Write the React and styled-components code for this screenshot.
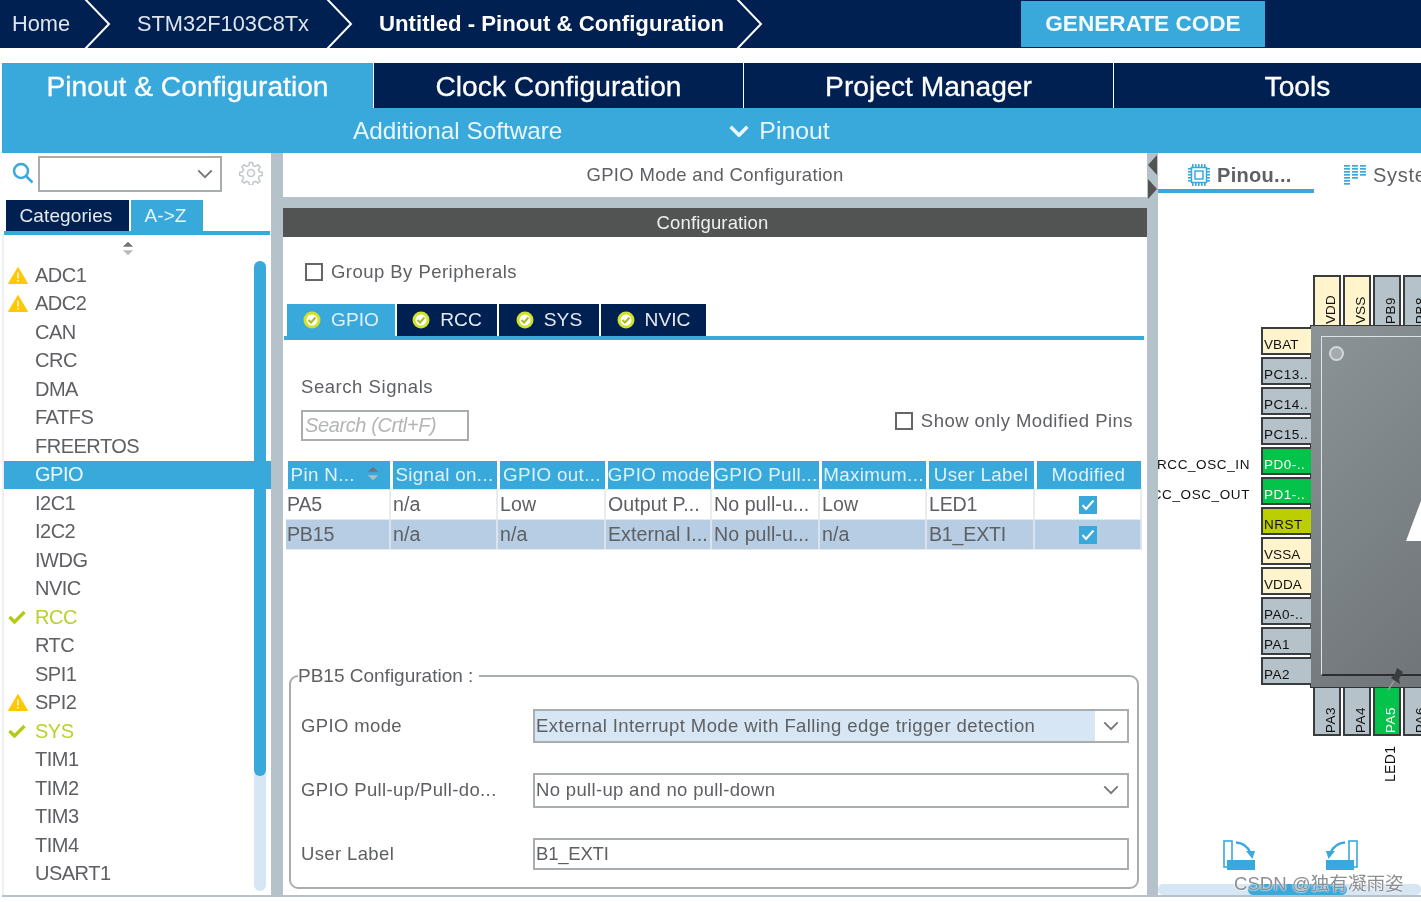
import React from 'react';
import styled, { createGlobalStyle } from 'styled-components';

const navy = '#002052';
const blue = '#39a9dc';
const steel = '#b6c2c9';
const text = '#5e6063';

const GlobalStyle = createGlobalStyle`
  html, body {
    margin: 0;
    padding: 0;
    background: #fff;
    overflow: hidden;
  }
  * { box-sizing: border-box; }
`;

const Page = styled.div`
  width: 1421px;
  height: 902px;
  overflow: hidden;
  position: relative;
  background: #fff;
  color: ${text};
  font-family: 'Liberation Sans', Arial, sans-serif;
  filter: blur(0.35px);
`;

/* breadcrumb bar */
const TopBar = styled.div`
  height: 48px;
  background: ${navy};
  display: flex;
  align-items: center;
  color: #fff;
`;
const Crumb = styled.div`
  width: ${p => p.$w}px;
  height: 48px;
  flex: none;
  padding-left: ${p => p.$pad}px;
  display: flex;
  align-items: center;
  justify-content: space-between;
  font-weight: ${p => (p.$bold ? 700 : 400)};
  font-size: ${p => (p.$bold ? 22.2 : 21.8)}px;
  color: ${p => (p.$bold ? '#fff' : '#dfe5ec')};
  white-space: nowrap;
`;
const Generate = styled.div`
  margin-left: 258px;
  width: 244px;
  height: 46px;
  flex: none;
  background: ${blue};
  color: #f4fbfe;
  font-weight: 700;
  font-size: 22.6px;
  display: flex;
  align-items: center;
  justify-content: center;
`;

/* main perspective tabs */
const MainTabs = styled.div`
  margin: 15px 0 0 2px;
  height: 45px;
  display: flex;
  gap: 1px;
`;
const MainTab = styled.div`
  width: ${p => p.$w}px;
  flex: none;
  background: ${p => (p.$active ? blue : navy)};
  color: #fff;
  font-size: 28.2px;
  -webkit-text-stroke: 0.3px #fff;
  padding-top: 2px;
  display: flex;
  align-items: center;
  justify-content: center;
`;
const SubBar = styled.div`
  margin-left: 2px;
  height: 45px;
  background: ${blue};
  color: #eaf6fc;
  font-size: 24.3px;
  display: flex;
  align-items: center;
  padding-left: 351px;
`;
const SubPinout = styled.div`
  margin-left: 167px;
  display: flex;
  align-items: center;
  gap: 10px;
  font-size: 24.8px;
`;

/* three columns */
const Workspace = styled.div`
  margin-left: 2px;
  height: 744px;
  display: flex;
  border-bottom: 2px solid ${steel};
`;
const Divider = styled.div`
  width: ${p => p.$w}px;
  background: ${steel};
  position: relative;
  flex: none;
`;
const Collapse = styled.svg`
  position: absolute;
  left: 1px;
  top: 2px;
`;

/* left column */
const Sidebar = styled.div`
  width: 269px;
  flex: none;
  display: flex;
  flex-direction: column;
`;
const SearchRow = styled.div`
  height: 47px;
  flex: none;
  padding: 3px 0 0 10px;
  display: flex;
  align-items: flex-start;
`;
const SearchGlass = styled.svg`
  margin: 6px 4px 0 0;
  flex: none;
`;
const Combo = styled.div`
  width: 184px;
  height: 36px;
  border: 2px solid #a9adb0;
  background: #fff;
  display: flex;
  align-items: center;
  justify-content: flex-end;
  padding-right: 7px;
`;
const Gear = styled.svg`
  margin: 5px 0 0 17px;
`;
const SideTabs = styled.div`
  padding-left: 4px;
  display: flex;
  gap: 2px;
  height: 31px;
  flex: none;
`;
const SideTab = styled.div`
  width: ${p => p.$w}px;
  background: ${p => (p.$active ? blue : navy)};
  color: ${p => (p.$active ? '#e9f6fc' : '#e6eaee')};
  font-size: 19px;
  letter-spacing: 0.1px;
  padding-right: 3px;
  display: flex;
  align-items: center;
  justify-content: center;
`;
const SideLine = styled.div`
  height: 4px;
  flex: none;
  margin: 0 1px 0 2px;
  background: ${blue};
`;
const ListArea = styled.div`
  flex: 1;
  position: relative;
  border-left: 2px solid #eef1f3;
  overflow: hidden;
`;
const SortMark = styled.div`
  position: absolute;
  left: 118px;
  top: 6px;
`;
const List = styled.div`
  padding-top: 26px;
`;
const ListRow = styled.div`
  height: 28.5px;
  padding-left: 1px;
  display: flex;
  align-items: center;
  font-size: 20px;
  letter-spacing: -0.5px;
  background: ${p => (p.$selected ? blue : 'transparent')};
  color: ${p => (p.$selected ? '#e9f6fc' : p.$ok ? '#bcd02b' : text)};
`;
const RowIcon = styled.div`
  width: 30px;
  flex: none;
  display: flex;
  align-items: center;
  justify-content: flex-start;
  padding-left: 3px;
`;
const SideScroll = styled.div`
  position: absolute;
  left: 250px;
  top: 26px;
  width: 12px;
  height: 630px;
  border-radius: 6px;
  background: #d6e6f4;
`;
const SideThumb = styled.div`
  height: 515px;
  border-radius: 6px;
  background: ${blue};
`;

/* middle column */
const Center = styled.div`
  width: 864px;
  flex: none;
  display: flex;
  flex-direction: column;
`;
const CenterTitle = styled.div`
  height: 44px;
  flex: none;
  display: flex;
  align-items: center;
  justify-content: center;
  font-size: 18.5px;
  letter-spacing: 0.3px;
`;
const GapBar = styled.div`
  height: 11px;
  flex: none;
  background: ${steel};
`;
const ConfigHead = styled.div`
  height: 29px;
  flex: none;
  background: #525453;
  color: #eef0f0;
  font-size: 18.5px;
  letter-spacing: 0.15px;
  display: flex;
  align-items: center;
  justify-content: center;
  padding: 1px 5px 0 0;
`;
const ConfigBody = styled.div`
  flex: 1;
  display: flex;
  flex-direction: column;
  padding: 0 3px 0 1px;
`;
const Check = styled.label`
  display: flex;
  align-items: center;
  gap: 8px;
  font-size: 18.5px;
  letter-spacing: 0.46px;
`;
const Box = styled.span`
  width: 18px;
  height: 18px;
  border: 2px solid #666;
  background: #fff;
  flex: none;
`;
const GroupRow = styled.div`
  padding: 24px 0 0 21px;
  height: 67px;
  flex: none;
`;
const InnerTabs = styled.div`
  display: flex;
  gap: 2px;
  height: 32px;
  flex: none;
  padding-left: 3px;
`;
const InnerTab = styled.div`
  width: ${p => p.$w}px;
  background: ${p => (p.$active ? blue : navy)};
  color: ${p => (p.$active ? '#dff1fa' : '#e6eaee')};
  font-size: 19.2px;
  display: flex;
  align-items: center;
  justify-content: center;
  gap: 10px;
`;
const InnerLine = styled.div`
  height: 4px;
  flex: none;
  background: ${blue};
`;
const SearchBlock = styled.div`
  height: 121px;
  flex: none;
  position: relative;
  padding: 36px 0 0 17px;
`;
const FieldCaption = styled.div`
  font-size: 18.5px;
  letter-spacing: 0.55px;
  line-height: 22px;
`;
const SignalSearch = styled.div`
  margin-top: 12px;
  width: 168px;
  height: 31px;
  border: 2px solid #a9adb0;
  padding-left: 2px;
  display: flex;
  align-items: center;
  font-size: 20px;
  font-style: italic;
  letter-spacing: -0.4px;
  color: #b3b5b7;
`;
const ModifiedOnly = styled.div`
  position: absolute;
  right: 11px;
  top: 70px;
`;
const Table = styled.div`
  margin: 0 2px;
  width: 856px;
  flex: none;
`;
const TableRow = styled.div`
  display: grid;
  grid-template-columns: 105px 107px 108px 106px 108px 107px 108px 107px;
  height: ${p => p.$h}px;
  background: ${p => (p.$selected ? '#b7cde4' : 'transparent')};
  border-bottom: 1px solid #e4e8eb;
`;
const HeadCell = styled.div`
  margin: 0 1.5px;
  background: ${blue};
  color: #dff1fa;
  font-size: 18.8px;
  letter-spacing: 0.35px;
  display: flex;
  align-items: center;
  justify-content: ${p => (p.$center ? 'center' : 'flex-start')};
  padding-left: ${p => (p.$center ? 0 : 3)}px;
  white-space: nowrap;
  position: relative;
`;
const Cell = styled.div`
  border-right: 2px solid ${p => (p.$selected ? '#d9e4ef' : '#e9ecee')};
  display: flex;
  align-items: center;
  justify-content: ${p => (p.$center ? 'center' : 'flex-start')};
  padding-left: ${p => (p.$center ? 0 : p.$first ? 1 : 2)}px;
  font-size: 19.6px;
  letter-spacing: ${p => p.$ls}px;
  white-space: nowrap;
`;
const TickBox = styled.span`
  width: 18px;
  height: 18px;
  background: ${blue};
  display: flex;
  align-items: center;
  justify-content: center;
`;
const SortSlot = styled.div`
  position: absolute;
  right: 11px;
  top: 3px;
`;
const Fieldset = styled.fieldset`
  margin: 115px 0 0 5px;
  width: 850px;
  height: 224px;
  flex: none;
  border: 2px solid #a9adb0;
  border-radius: 9px;
  padding: 7px 0 0;
  display: flex;
  flex-direction: column;
  position: relative;
`;
const Legend = styled.legend`
  margin-left: 7px;
  padding: 0 6px 0 0;
  font-size: 19px;
  line-height: 22px;
`;
const FieldRow = styled.div`
  display: grid;
  grid-template-columns: 232px 596px;
  align-items: center;
  height: 64px;
  flex: none;
  padding-left: 10px;
`;
const FieldLabel = styled.div`
  font-size: 18.5px;
  letter-spacing: 0.37px;
  white-space: nowrap;
`;
const Control = styled.div`
  height: ${p => p.$h}px;
  border: 2px solid #a9adb0;
  display: flex;
  align-items: center;
  font-size: 18.5px;
  letter-spacing: ${p => p.$ls}px;
  padding-left: 1px;
  background: #fff;
  white-space: nowrap;
`;
const ControlText = styled.div`
  flex: 1;
  align-self: stretch;
  display: flex;
  align-items: center;
  background: ${p => (p.$filled ? '#d6e6f4' : 'transparent')};
  margin-left: -1px;
  padding-left: 1px;
`;
const ControlArrow = styled.div`
  width: 32px;
  flex: none;
  display: flex;
  justify-content: center;
`;

/* right column */
const Right = styled.div`
  flex: 1;
  min-width: 0;
  display: flex;
  flex-direction: column;
  position: relative;
  overflow: hidden;
`;
const RightTabs = styled.div`
  height: 40px;
  flex: none;
  display: flex;
  position: relative;
  font-size: 20px;
  white-space: nowrap;
`;
const RightTab = styled.div`
  width: ${p => p.$w}px;
  flex: none;
  height: 40px;
  display: flex;
  align-items: center;
  padding-left: ${p => p.$pad}px;
  padding-top: 8px;
  gap: ${p => p.$gap}px;
  font-weight: ${p => (p.$active ? 700 : 400)};
  letter-spacing: ${p => (p.$active ? 0.3 : 0.7)}px;
  border-bottom: ${p => (p.$active ? `4px solid ${blue}` : 0)};
  padding-bottom: ${p => (p.$active ? 0 : 4)}px;
  svg { flex: none; }
`;
const ChipLayout = styled.div`
  flex: 1;
  position: relative;
  overflow: hidden;
  padding: 82px 0 0 103px;
`;
const ChipGrid = styled.div`
  display: grid;
  grid-template-columns: 49px 400px;
  grid-template-rows: 50px 363px 48px;
`;
const PinRow = styled.div`
  grid-column: 2;
  display: flex;
  gap: 2px;
  padding-left: 3px;
`;
const PinColumn = styled.div`
  display: flex;
  flex-direction: column;
  gap: 2px;
  padding-top: 2px;
`;
const pinColors = {
  free: steel,
  power: '#fff4cc',
  active: '#03c34b',
  reset: '#bccd00',
};
const Pin = styled.div`
  position: relative;
  flex: none;
  background: ${p => pinColors[p.$kind || 'free']};
  color: ${p => (p.$kind === 'active' ? '#fff' : '#111')};
  border: 2px solid #3a3d3f;
  font-size: 13.5px;
  letter-spacing: ${p => (p.$kind === 'power' ? 0.1 : 0.5)}px;
  white-space: nowrap;
  display: flex;
  align-items: center;
  ${p =>
    p.$side === 'left'
      ? `width: 50px; height: 28px; padding: 7px 0 0 1px; border-right: 0;`
      : `width: 28px; writing-mode: vertical-rl; transform: rotate(180deg); justify-content: flex-start; padding: 1px 7px 0 0;`}
  ${p => p.$side === 'top' && 'height: 50px; border-top: 0;'}
  ${p => p.$side === 'bottom' && 'height: 48px; border-bottom: 0;'}
`;
const SignalLabel = styled.div`
  position: absolute;
  right: 61px;
  top: 8px;
  color: #111;
  font-size: 13.5px;
  letter-spacing: 0.6px;
`;
const LedLabel = styled.div`
  position: absolute;
  left: 0;
  right: 6px;
  top: -48px;
  display: flex;
  align-items: center;
  color: #111;
  font-size: 14px;
  letter-spacing: 0.3px;
`;
const Chip = styled.div`
  grid-column: 2;
  background: linear-gradient(135deg, #8c9498 0%, #5d6165 100%);
  border: 1px solid #333;
  padding: 10px 0 11px 10px;
  display: flex;
`;
const ChipFace = styled.div`
  flex: 1;
  position: relative;
  border-left: 1px solid #dfe3e5;
  border-top: 1px solid #dfe3e5;
  border-bottom: 2px solid #2c2e30;
`;
const ChipDot = styled.div`
  position: absolute;
  left: 7px;
  top: 9px;
  width: 15px;
  height: 15px;
  border-radius: 50%;
  background: #a3abb0;
  border: 2px solid #d3d7d9;
`;
const ChipLogo = styled.svg`
  position: absolute;
  left: 84px;
  top: 161px;
`;
const Pushpin = styled.svg`
  position: absolute;
  left: 1387px;
  top: 666px;
`;
const RotateButtons = styled.div`
  position: absolute;
  left: 65px;
  top: 687px;
  display: flex;
  gap: 71px;
`;
const RotateSvg = styled.svg`
  transform: ${p => (p.$mirror ? 'scaleX(-1)' : 'none')};
`;
const BottomScroll = styled.div`
  position: absolute;
  left: 0;
  right: 0;
  top: 731px;
  height: 11px;
  border-radius: 5px;
  background: #d6e6f4;
  padding-left: 90px;
`;
const BottomThumb = styled.div`
  width: 99px;
  height: 11px;
  border-radius: 6px;
  background: ${blue};
`;
const Watermark = styled.div`
  position: absolute;
  left: 1234px;
  top: 873px;
  font-family: 'Liberation Sans', 'Noto Sans CJK SC', sans-serif;
  font-size: 18.6px;
  line-height: 22px;
  color: #8b8f92;
  text-shadow: 0 0 2px #fff, 0 0 2px #fff;
  white-space: nowrap;
`;

const Chevron = () => (
  <svg width="27" height="48" viewBox="0 0 27 48">
    <path d="M1 -1 L25 24 L1 49" fill="none" stroke="#fff" strokeWidth="2" />
  </svg>
);
const Down = ({ w = 16, sw = 2, color = '#777' }) => (
  <svg width={w} height={w * 0.6} viewBox="0 0 16 10">
    <path d="M1 1.5 L8 8.5 L15 1.5" fill="none" stroke={color} strokeWidth={sw} />
  </svg>
);
const Warning = () => (
  <svg width="20" height="17" viewBox="0 0 20 17">
    <path d="M10 0.5 L19.5 16.5 L0.5 16.5 Z" fill="#ffc800" stroke="#ffc800" strokeLinejoin="round" />
    <rect x="9.3" y="5.5" width="1.4" height="6" fill="#fff" />
    <rect x="9.3" y="13" width="1.4" height="1.6" fill="#fff" />
  </svg>
);
const Tick = () => (
  <svg width="18" height="14" viewBox="0 0 18 14">
    <path d="M1.5 7 L6.5 12 L16.5 2" fill="none" stroke="#b3cb17" strokeWidth="3.4" />
  </svg>
);
const Badge = () => (
  <svg width="18" height="18" viewBox="0 0 18 18">
    <circle cx="9" cy="9" r="8.5" fill="#d2e22a" />
    <circle cx="9" cy="9" r="5.5" fill="#fff" />
    <path d="M5.5 9 L8 11.5 L12.5 6.5" fill="none" stroke="#a8bb1e" strokeWidth="2" />
  </svg>
);
const Sort = ({ x = 14, h = 16 }) => (
  <svg width={x} height={h} viewBox="0 0 14 16">
    <path d="M7 0 L13 6 L1 6 Z" fill="#6f7478" />
    <path d="M7 16 L13 10 L1 10 Z" fill="#b6bdc2" />
  </svg>
);
const GearIcon = () => (
  <Gear width="24" height="24" viewBox="0 0 24 24" fill="none" stroke="#c3c6c8" strokeWidth="1.5">
    <circle cx="12" cy="12" r="3.5" />
    <path d="M10.5 1.5h3l.6 3 2.3 1 2.6-1.7 2.1 2.1-1.7 2.6 1 2.3 3 .6v3l-3 .6-1 2.3 1.7 2.6-2.1 2.1-2.6-1.7-2.3 1-.6 3h-3l-.6-3-2.3-1-2.6 1.7-2.1-2.1 1.7-2.6-1-2.3-3-.6v-3l3-.6 1-2.3-1.7-2.6 2.1-2.1 2.6 1.7 2.3-1z" />
  </Gear>
);
const CpuIcon = () => (
  <svg width="22" height="22" viewBox="0 0 22 22">
    <rect x="3.5" y="3.5" width="15" height="15" fill="none" stroke={blue} strokeWidth="1.5" />
    <rect x="7" y="7" width="8" height="8" fill="none" stroke={blue} strokeWidth="1.5" />
    {[4, 7, 10, 13, 16].map(o => (
      <g key={o} fill={blue}>
        <rect x={o} y="0" width="1.6" height="3" />
        <rect x={o} y="19" width="1.6" height="3" />
        <rect x="0" y={o} width="3" height="1.6" />
        <rect x="19" y={o} width="3" height="1.6" />
      </g>
    ))}
  </svg>
);
const SystemIcon = () => (
  <svg width="22" height="21" viewBox="0 0 22 21" fill={blue}>
    {[0, 3, 6, 9, 12, 15, 18].map(y => <rect key={y} x="0" y={y} width="6" height="1.7" />)}
    {[0, 3, 6, 9, 12].map(y => <rect key={y} x="8" y={y} width="6" height="1.7" />)}
    {[0, 3, 6, 9].map(y => <rect key={y} x="16" y={y} width="6" height="1.7" />)}
  </svg>
);
const RotateIcon = ({ mirror }) => (
  <RotateSvg $mirror={mirror} width="32" height="30" viewBox="0 0 32 30">
    <rect x="1" y="1" width="8" height="26" fill="#fff" stroke={blue} strokeWidth="1.6" />
    <rect x="4" y="20" width="28" height="10" fill={blue} />
    <path d="M13 2.5 C20 3 25 7 27.5 13" fill="none" stroke={blue} strokeWidth="2.4" />
    <path d="M23 11 L32 11 L29.5 19 Z" fill={blue} />
  </RotateSvg>
);

const categories = [
  ['ADC1', 'warn'], ['ADC2', 'warn'], ['CAN'], ['CRC'], ['DMA'], ['FATFS'], ['FREERTOS'],
  ['GPIO', 'selected'], ['I2C1'], ['I2C2'], ['IWDG'], ['NVIC'], ['RCC', 'ok'], ['RTC'], ['SPI1'],
  ['SPI2', 'warn'], ['SYS', 'ok'], ['TIM1'], ['TIM2'], ['TIM3'], ['TIM4'], ['USART1'],
];
const headers = ['Pin N...', 'Signal on...', 'GPIO out...', 'GPIO mode', 'GPIO Pull...', 'Maximum...', 'User Label', 'Modified'];
const rows = [
  ['PA5', 'n/a', 'Low', 'Output P...', 'No pull-u...', 'Low', 'LED1'],
  ['PB15', 'n/a', 'n/a', 'External I...', 'No pull-u...', 'n/a', 'B1_EXTI'],
];
const leftPins = [
  ['VBAT', 'power'], ['PC13..'], ['PC14..'], ['PC15..'],
  ['PD0-..', 'active', 'RCC_OSC_IN'], ['PD1-..', 'active', 'RCC_OSC_OUT'],
  ['NRST', 'reset'], ['VSSA', 'power'], ['VDDA', 'power'], ['PA0-..'], ['PA1'], ['PA2'],
];
const topPins = [['VDD', 'power'], ['VSS', 'power'], ['PB9'], ['PB8']];
const bottomPins = [['PA3'], ['PA4'], ['PA5', 'active'], ['PA6']];

export default function App() {
  return (
    <Page>
      <GlobalStyle />
      <TopBar>
        <Crumb $w={111} $pad={12}>Home<Chevron /></Crumb>
        <Crumb $w={242} $pad={26}>STM32F103C8Tx<Chevron /></Crumb>
        <Crumb $w={410} $pad={26} $bold>Untitled - Pinout &amp; Configuration<Chevron /></Crumb>
        <Generate>GENERATE CODE</Generate>
      </TopBar>

      <MainTabs>
        <MainTab $w={371} $active>Pinout &amp; Configuration</MainTab>
        <MainTab $w={369}>Clock Configuration</MainTab>
        <MainTab $w={369}>Project Manager</MainTab>
        <MainTab $w={367}>Tools</MainTab>
      </MainTabs>
      <SubBar>
        Additional Software
        <SubPinout><Down w={20} sw={3} color="#eaf6fc" />Pinout</SubPinout>
      </SubBar>

      <Workspace>
        <Sidebar>
          <SearchRow>
            <SearchGlass width="22" height="22" viewBox="0 0 22 22" fill="none" stroke={blue} strokeWidth="2.5">
              <circle cx="9" cy="9" r="7" />
              <path d="M14 14 L20.5 20.5" />
            </SearchGlass>
            <Combo><Down /></Combo>
            <GearIcon />
          </SearchRow>
          <SideTabs>
            <SideTab $w={123}>Categories</SideTab>
            <SideTab $w={72} $active>A-&gt;Z</SideTab>
          </SideTabs>
          <SideLine />
          <ListArea>
            <SortMark><Sort x={12} h={15} /></SortMark>
            <List>
              {categories.map(([name, state]) => (
                <ListRow key={name} $selected={state === 'selected'} $ok={state === 'ok'}>
                  <RowIcon>
                    {state === 'warn' && <Warning />}
                    {state === 'ok' && <Tick />}
                  </RowIcon>
                  {name}
                </ListRow>
              ))}
            </List>
            <SideScroll><SideThumb /></SideScroll>
          </ListArea>
        </Sidebar>

        <Divider $w={12} />

        <Center>
          <CenterTitle>GPIO Mode and Configuration</CenterTitle>
          <GapBar />
          <ConfigHead>Configuration</ConfigHead>
          <ConfigBody>
            <GroupRow><Check><Box />Group By Peripherals</Check></GroupRow>
            <InnerTabs>
              <InnerTab $w={108} $active><Badge />GPIO</InnerTab>
              <InnerTab $w={100}><Badge />RCC</InnerTab>
              <InnerTab $w={100}><Badge />SYS</InnerTab>
              <InnerTab $w={105}><Badge />NVIC</InnerTab>
            </InnerTabs>
            <InnerLine />
            <SearchBlock>
              <FieldCaption>Search Signals</FieldCaption>
              <SignalSearch>Search (Crtl+F)</SignalSearch>
              <ModifiedOnly><Check><Box />Show only Modified Pins</Check></ModifiedOnly>
            </SearchBlock>
            <Table>
              <TableRow $h={29}>
                {headers.map((h, i) => (
                  <HeadCell key={h} $center={i >= 1}>
                    {h}
                    {i === 0 && <SortSlot><Sort x={12} h={15} /></SortSlot>}
                  </HeadCell>
                ))}
              </TableRow>
              {rows.map((row, r) => (
                <TableRow key={row[0]} $h={30} $selected={r === 1}>
                  {row.map((c, i) => (
                    <Cell key={i} $first={i === 0} $selected={r === 1} $ls={i === 0 || i === 6 ? -0.2 : 0.05}>{c}</Cell>
                  ))}
                  <Cell $center $selected={r === 1}>
                    <TickBox>
                      <svg width="14" height="12" viewBox="0 0 14 12">
                        <path d="M1.5 6 L5 10 L12.5 1.5" fill="none" stroke="#fff" strokeWidth="2" />
                      </svg>
                    </TickBox>
                  </Cell>
                </TableRow>
              ))}
            </Table>
            <Fieldset>
              <Legend>PB15 Configuration :</Legend>
              <FieldRow>
                <FieldLabel>GPIO mode</FieldLabel>
                <Control $h={34} $ls={0.41}>
                  <ControlText $filled>External Interrupt Mode with Falling edge trigger detection</ControlText>
                  <ControlArrow><Down /></ControlArrow>
                </Control>
              </FieldRow>
              <FieldRow>
                <FieldLabel>GPIO Pull-up/Pull-do...</FieldLabel>
                <Control $h={35} $ls={0.33}>
                  <ControlText>No pull-up and no pull-down</ControlText>
                  <ControlArrow><Down /></ControlArrow>
                </Control>
              </FieldRow>
              <FieldRow>
                <FieldLabel>User Label</FieldLabel>
                <Control $h={32} $ls={-0.2}><ControlText>B1_EXTI</ControlText></Control>
              </FieldRow>
            </Fieldset>
          </ConfigBody>
        </Center>

        <Divider $w={11}>
          <Collapse width="10" height="44" viewBox="0 0 10 44" fill="#525453">
            <path d="M9 0 L9 20 L0 10 Z" />
            <path d="M0 24 L0 44 L9 34 Z" />
          </Collapse>
        </Divider>

        <Right>
          <RightTabs>
            <RightTab $w={156} $pad={30} $gap={7} $active><CpuIcon />Pinou...</RightTab>
            <RightTab $w={120} $pad={30} $gap={7}><SystemIcon />System</RightTab>
          </RightTabs>
          <ChipLayout>
            <ChipGrid>
              <PinRow>
                {topPins.map(([n, k]) => <Pin key={n} $side="top" $kind={k}>{n}</Pin>)}
              </PinRow>
              <PinColumn>
                {leftPins.map(([n, k, signal]) => (
                  <Pin key={n} $side="left" $kind={k}>
                    {n}
                    {signal && <SignalLabel>{signal}</SignalLabel>}
                  </Pin>
                ))}
              </PinColumn>
              <Chip>
                <ChipFace>
                  <ChipDot />
                  <ChipLogo width="20" height="44" viewBox="0 0 20 44">
                    <path d="M16 0 L20 0 L20 43 L0 43 Z" fill="#fff" />
                  </ChipLogo>
                </ChipFace>
              </Chip>
              <PinRow>
                {bottomPins.map(([n, k]) => (
                  <Pin key={n} $side="bottom" $kind={k}>
                    {n}
                    {n === 'PA5' && <LedLabel>LED1</LedLabel>}
                  </Pin>
                ))}
              </PinRow>
            </ChipGrid>
          </ChipLayout>
          <RotateButtons>
            <RotateIcon />
            <RotateIcon mirror />
          </RotateButtons>
          <BottomScroll><BottomThumb /></BottomScroll>
        </Right>
      </Workspace>

      <Pushpin width="18" height="26" viewBox="0 0 18 26">
        <path d="M1 24 L7 15" stroke="#999" strokeWidth="1.5" />
        <path d="M4 12 L13 18 L12 13 L16 6 L10 2 L8 8 Z" fill="#3a3d40" />
      </Pushpin>
      <Watermark>CSDN @独有凝雨姿</Watermark>
    </Page>
  );
}
